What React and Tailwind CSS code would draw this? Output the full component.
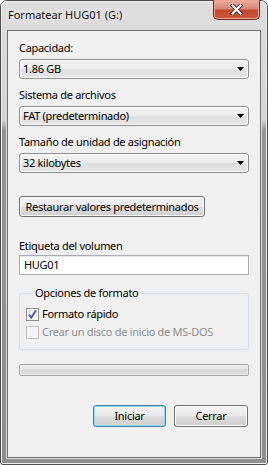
import React from 'react';

const font = "font-['Noto_Sans','Segoe_UI',sans-serif]";

function Combo({ value }) {
    return (
        <div className="mt-[4px] flex h-[20px] items-center justify-between rounded-[3px] border border-[#8e8f8f] bg-[linear-gradient(to_bottom,#f4f4f4_0%,#ececec_50%,#dfdfdf_51%,#e6e6e6_100%)] pl-[3px] pr-[4px] shadow-[inset_0_0_0_1px_#fbfbfb]">
            <span className="leading-[14px]">{value}</span>
            <svg width="7" height="4" viewBox="0 0 7 4">
                <path d="M0 0 H7 L3.5 4 Z" fill="#000" />
            </svg>
        </div>
    );
}

function Label({ children, className = 'mt-[9px]' }) {
    return <div className={`${className} leading-[14px]`}>{children}</div>;
}

function Button({ children, primary, className = '' }) {
    return (
        <button
            type="button"
            className={`${className} flex items-center justify-center whitespace-nowrap rounded-[3px] border bg-[linear-gradient(to_bottom,#f2f2f2_0%,#ebebeb_50%,#dddddd_51%,#cfcfcf_100%)] leading-[14px] text-black ${
                primary
                    ? 'border-[#3c7fb1] shadow-[inset_0_0_0_1px_#8fdcf7]'
                    : 'border-[#707070] shadow-[inset_0_0_0_1px_#fcfcfc]'
            }`}
        >
            {children}
        </button>
    );
}

function Checkbox({ checked, disabled, label }) {
    return (
        <div className="flex items-center">
            <div
                className={`flex h-[13px] w-[13px] items-center justify-center border ${
                    disabled
                        ? 'border-[#c4c4c4] bg-[#f4f4f4]'
                        : 'border-[#8e8f8f] bg-[linear-gradient(135deg,#dcdcdc_0%,#f6f6f6_60%,#ffffff_100%)] shadow-[inset_0_0_0_1px_#f4f4f4]'
                }`}
            >
                {checked && (
                    <svg width="11" height="11" viewBox="0 0 11 11">
                        <path d="M2 5.5 L4.3 8.5 L9 1.5" fill="none" stroke="#4a5f97" strokeWidth="2" />
                    </svg>
                )}
            </div>
            <span className={`ml-[3px] leading-[14px] ${disabled ? 'text-[#8d8d8d]' : 'text-black'}`}>{label}</span>
        </div>
    );
}

export default function App() {
    return (
        <div className={`${font} text-[11px] text-black`}>
            <div className="flex h-[465px] w-[268px] flex-col rounded-t-[7px] rounded-b-[3px] border border-[#4e4e4e] bg-[#d6d6d6]">
                <div className="flex flex-1 flex-col rounded-t-[6px] rounded-b-[2px] border border-[#ededed] bg-[linear-gradient(to_bottom,#dedede_0px,#d3d3d3_118px,#949494_128px,#8e8e8e_100%)]">
                    {/* title bar */}
                    <div className="flex h-[27px] items-start justify-between">
                        <span className="pl-[6px] pt-[6px] leading-[14px] text-[#111] [text-shadow:0_0_6px_#ffffff]">
                            Formatear HUG01 (G:)
                        </span>
                        <div className="-mt-[2px] mr-[6px] flex h-[20px] w-[47px] items-center justify-center rounded-b-[5px] border border-t-0 border-[#6b2a22] bg-[linear-gradient(to_bottom,#eab2a3_0%,#d98672_45%,#c4482d_55%,#cc5a3c_100%)] shadow-[inset_0_0_0_1px_#f0a592]">
                            <svg width="13" height="11" viewBox="0 0 13 11">
                                <path d="M2.5 1.5 L10.5 9.5 M10.5 1.5 L2.5 9.5" stroke="#3b3b3b" strokeWidth="4" strokeLinecap="square" />
                                <path d="M2.5 1.5 L10.5 9.5 M10.5 1.5 L2.5 9.5" stroke="#ffffff" strokeWidth="2" strokeLinecap="square" />
                            </svg>
                        </div>
                    </div>

                    {/* client area */}
                    <div className="mx-[4px] mb-[4px] border border-[#dadada]">
                        <div className="flex h-[428px] flex-col border border-[#6f6f6f] bg-[#f0f0f0] px-[11px] tracking-[-0.3px]">
                            <Label className="mt-[10px]">Capacidad:</Label>
                            <Combo value="1.86 GB" />

                            <Label>Sistema de archivos</Label>
                            <Combo value="FAT (predeterminado)" />

                            <Label>Tamaño de unidad de asignación</Label>
                            <Combo value="32 kilobytes" />

                            <Button className="mt-[23px] h-[21px] w-[186px] self-start">
                                Restaurar valores predeterminados
                            </Button>

                            <Label className="mt-[22px]">Etiqueta del volumen</Label>
                            <div className="mt-[2px] flex h-[20px] items-center border border-[#abadb3] bg-white pl-[4px] shadow-[inset_0_1px_0_#e3e9ef]">
                                <span className="leading-[14px]">HUG01</span>
                            </div>

                            <fieldset className="mt-[11px] rounded-[3px] border border-[#d5dfe5] pb-[10px] pl-[6px]">
                                <legend className="ml-[7px] px-[2px] leading-[14px]">Opciones de formato</legend>
                                <div className="mt-[7px]">
                                    <Checkbox checked label="Formato rápido" />
                                </div>
                                <div className="mt-[4px]">
                                    <Checkbox disabled label="Crear un disco de inicio de MS-DOS" />
                                </div>
                            </fieldset>

                            <div className="mt-[14px] h-[12px] rounded-[2px] border border-[#a9a9a9] bg-[linear-gradient(to_bottom,#f4f4f4_0%,#e2e2e2_45%,#d6d6d6_55%,#e4e4e4_100%)] shadow-[inset_0_0_0_1px_#ececec]" />

                            <div className="mt-[29px] flex justify-end gap-[8px] pr-[1px]">
                                <Button primary className="h-[22px] w-[73px]">Iniciar</Button>
                                <Button className="h-[22px] w-[74px]">Cerrar</Button>
                            </div>
                        </div>
                    </div>
                </div>
            </div>
        </div>
    );
}
